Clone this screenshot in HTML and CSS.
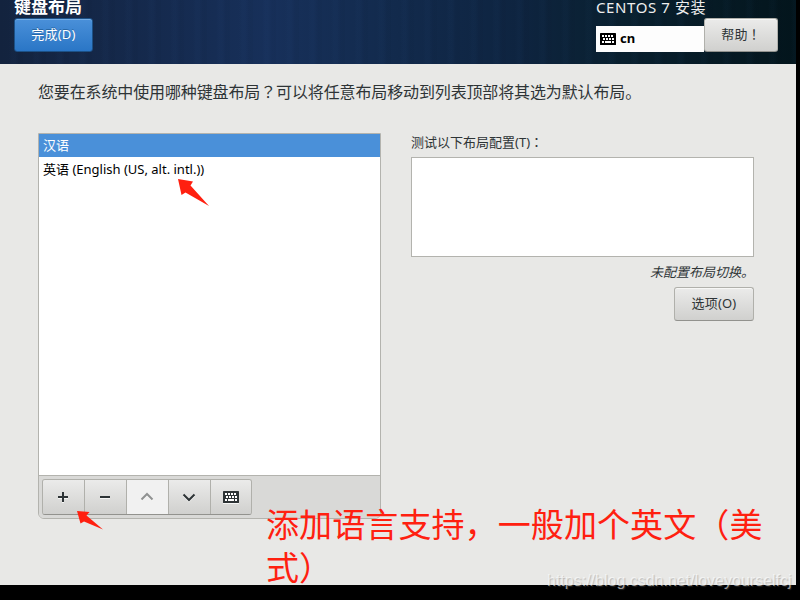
FILE: index.html
```html
<!DOCTYPE html>
<html lang="zh-CN">
<head>
  <meta charset="UTF-8">
  <title>键盘布局</title>
  <link rel="stylesheet" href="styles.css">
</head>
<body>

<svg class="defs" width="0" height="0">
  <symbol id="keyboard" viewBox="0 0 16 12">
    <rect width="16" height="12" rx="0.6" fill="currentColor"/>
    <path d="M2 3h2M5 3h2M8 3h2M11 3h2M3 6h2M6 6h2M9 6h2M12 6h2M2 9h2M5 9h6M12 9h2" stroke="#fff" stroke-width="2" fill="none"/>
  </symbol>
</svg>

<div class="window">
  <header class="header">
    <div class="header-left">
      <h1>键盘布局</h1>
      <button class="btn btn-done">完成(D)</button>
    </div>
    <div class="header-right">
      <div class="product">CENTOS 7 安装</div>
      <div class="header-row">
        <div class="layout-indicator">
          <svg width="16" height="12"><use href="#keyboard"/></svg>
          <span>cn</span>
        </div>
        <button class="btn btn-help">帮助<span class="punct" lang="zh-TW">！</span></button>
      </div>
    </div>
  </header>

  <main>
    <p class="intro">您要在系统中使用哪种键盘布局<span class="punct" lang="zh-TW">？</span>可以将任意布局移动到列表顶部将其选为默认布局。</p>
    <div class="columns">
      <section class="layouts">
        <ul class="list">
          <li class="selected">汉语</li>
          <li>英语 (English (US, alt. intl.))</li>
        </ul>
        <div class="toolbar">
          <div class="tools">
            <button><svg width="16" height="16"><path d="M3 8h10M8 3v10"/></svg></button>
            <button><svg width="16" height="16"><path d="M3 8h10"/></svg></button>
            <button class="disabled"><svg width="16" height="16"><path d="M2.500 10.500 8 5l5.500 5.500"/></svg></button>
            <button><svg width="16" height="16"><path d="M2.500 5.500 8 11l5.500-5.500"/></svg></button>
            <button><svg class="kbd" width="16" height="12"><use href="#keyboard"/></svg></button>
          </div>
        </div>
      </section>
      <section class="test">
        <label for="test">测试以下布局配置(T)<span class="punct" lang="zh-TW">：</span></label>
        <textarea id="test"></textarea>
        <p class="hint">未配置布局切换。</p>
        <button class="btn btn-options">选项(O)</button>
      </section>
    </div>
  </main>
</div>

<svg class="arrow arrow-list" width="34" height="30"><path d="M1 1 16 3.500 13.500 7.500 32 28 8.500 14.500 4.500 17z"/></svg>
<svg class="arrow arrow-add" width="30" height="24"><path d="M1 1 13.500 2 10.500 5.500 27 19.500 8 11.500 4.500 13.500z"/></svg>
<p class="note">添加语言支持，一般加个英文（美<br>式）</p>
<div class="watermark">https://blog.csdn.net/loveyourselfcj</div>

</body>
</html>
```

FILE: styles.css
```css
* { box-sizing: border-box; }
body { margin: 0; width: 800px; height: 600px; overflow: hidden; position: relative; background: #000; color: #2e3436; font: 13px/18px "Noto Sans", "Noto Sans CJK SC", sans-serif; }
h1, p, ul { margin: 0; padding: 0; }
button, textarea { font: inherit; color: inherit; }
.defs { position: absolute; }
.punct { font-family: "Noto Sans CJK TC", sans-serif; line-height: 1; }

.window { width: 796px; height: 585px; background: #e8e8e6; overflow: hidden; }

.header { height: 64px; display: flex; justify-content: space-between; padding: 0 18px 0 14px;
  background:
    repeating-linear-gradient(90deg, rgba(60,110,180,0) 0 9px, rgba(60,110,180,.03) 12px 15px, rgba(0,0,20,.03) 19px 23px),
    linear-gradient(90deg, #13233e 0%, #152a4e 20%, #17305a 34%, #122a4c 50%, #0e2440 65%, #09202f 78%, #03151c 100%); }
h1 { font-size: 17px; line-height: 18px; height: 18px; margin-top: -2px; margin-bottom: 2px; color: #fff; font-weight: bold; }
.header-right { width: 182px; }
.product { height: 18px; margin-top: -2px; margin-bottom: 2px; font-size: 15px; letter-spacing: .6px; color: #eee; white-space: nowrap; }
.header-row { display: flex; }
.layout-indicator { width: 108px; height: 26px; margin-top: 8px; padding-left: 4px; background: #fdfdfd; color: #000; display: flex; align-items: center; gap: 4px; font-weight: bold; }
.layout-indicator span { line-height: 18px; margin-top: -2px; }

.btn { display: block; height: 34px; padding: 0 0 2px; border: 1px solid #b0b0ab; border-bottom-color: #92928e; border-radius: 3px; background: linear-gradient(#ebebea, #d0d0ce); box-shadow: inset 0 1px #f7f7f6; letter-spacing: .2px; }
.btn-done { width: 79px; color: #fff; background: linear-gradient(#4a90d9, #2a76c6); border-color: #1c5187; box-shadow: inset 0 1px #76ade4; text-shadow: 0 -1px #2867a5; }
.btn-help { width: 74px; }

main { padding: 18px 42px 0 38px; }
.intro { height: 20px; font-size: 16px; line-height: 20px; letter-spacing: -.13px; white-space: nowrap; }
.columns { display: flex; gap: 30px; margin-top: 31px; }

.layouts { width: 343px; height: 386px; border: 1px solid #b3b3ae; border-radius: 0 0 6px 6px; overflow: hidden; display: flex; flex-direction: column; }
.list { height: 341px; list-style: none; background: #fff; color: #000; }
.list li { height: 24px; line-height: 24px; padding-left: 4px; }
.list .selected { height: 23px; line-height: 23px; background: #4a90d9; color: #fff; }
.toolbar { flex: 1; padding: 3px; border-top: 1px solid #b3b3ae; background: #d9d9d7; }
.tools { display: flex; width: 210px; height: 36px; border: 1px solid #b0b0ab; border-bottom-color: #92928e; border-radius: 3px; overflow: hidden; }
.tools button { flex: 0 0 42px; display: flex; align-items: center; justify-content: center; padding: 0 1px 0 0; border: 0; border-right: 1px solid #b0b0ab; background: linear-gradient(#ebebea, #d0d0ce); }
.tools button:last-child { flex: 1; padding: 0; border-right: 0; }
.tools .disabled { background: #f1f1f1; color: #909292; }
.tools svg { fill: none; stroke: currentColor; stroke-width: 2; filter: drop-shadow(0 1px #f6f6f5); }
.tools .kbd { stroke: none; }

.test { width: 343px; display: flex; flex-direction: column; }
.test label { height: 24px; }
.test textarea { width: 343px; height: 100px; border: 1px solid #b3b3ae; background: #fff; resize: none; }
.hint { margin-top: 6px; height: 24px; text-align: right; font-style: italic; }
.btn-options { width: 80px; align-self: flex-end; }

.arrow { position: absolute; fill: #ff2010; }
.arrow-list { left: 177px; top: 178px; }
.arrow-add { left: 76px; top: 510px; }
.note { position: absolute; left: 266px; top: 502px; color: #ff2010; font: 33px/43px "Noto Sans CJK SC", sans-serif; letter-spacing: .1px; white-space: nowrap; }
.watermark { position: absolute; left: 547px; top: 571px; font: 16px/20px "Liberation Sans", sans-serif; color: rgba(255,255,255,.6); text-shadow: 1px 1px 1px rgba(100,100,100,.35); white-space: nowrap; }
```
